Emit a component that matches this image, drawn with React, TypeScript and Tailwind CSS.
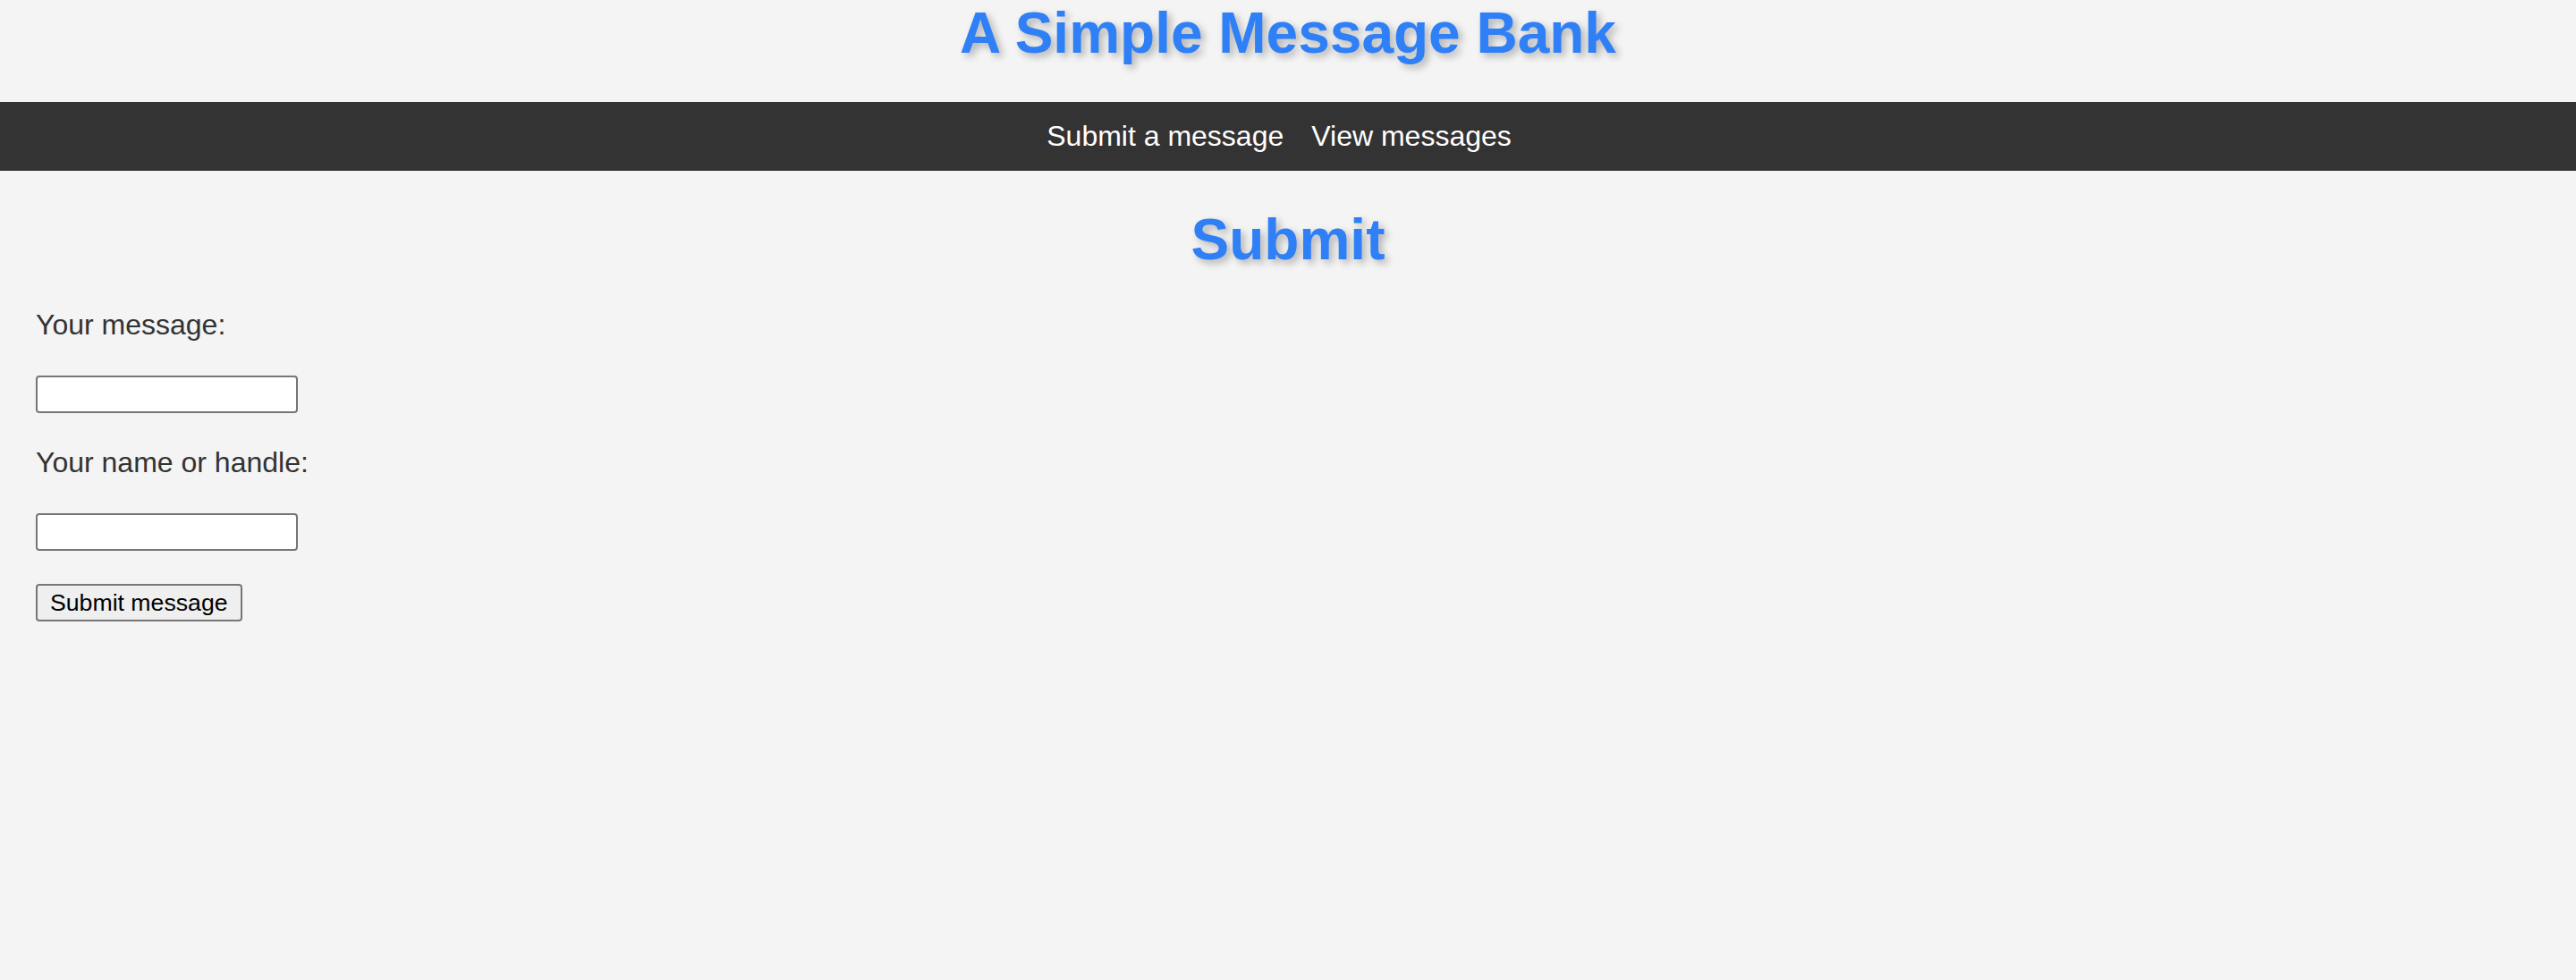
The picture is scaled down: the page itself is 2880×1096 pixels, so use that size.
import React, { useState } from "react";

const headingShadow = "[text-shadow:4px_4px_8px_rgba(0,0,0,0.28)]";

const App = () => {
  const [message, setMessage] = useState("");
  const [handle, setHandle] = useState("");

  return (
    <div className="min-h-screen bg-[#f4f4f4] font-['Liberation_Sans',Arial,sans-serif]">
      {/* Header */}
      <header>
        <h1 className={`text-center text-[64px] leading-[74px] font-bold text-[#2f80f7] ${headingShadow}`}>
          A Simple Message Bank
        </h1>
      </header>

      {/* Nav bar */}
      <nav className="mt-[40px] bg-[#333333] py-[20px] pr-[20px] flex justify-center gap-[31px]">
        <a href="#submit" className="text-[32px] leading-[37px] text-white">
          Submit a message
        </a>
        <a href="#view" className="text-[32px] leading-[37px] text-white">
          View messages
        </a>
      </nav>

      <main className="px-[40px]">
        <h2 className={`mt-[40px] text-center text-[64px] leading-[74px] font-bold text-[#2f80f7] ${headingShadow}`}>
          Submit
        </h2>

        <form
          className="mt-[40px] flex flex-col items-start gap-[37.5px]"
          onSubmit={(e) => e.preventDefault()}
        >
          <label htmlFor="message" className="text-[32px] leading-[37px] text-[#333333]">
            Your message:
          </label>
          <input
            id="message"
            type="text"
            value={message}
            onChange={(e) => setMessage(e.target.value)}
            className="w-[293px] h-[42px] bg-white border-2 border-[#767676] rounded-[4px] px-[4px] text-[26px]"
          />
          <label htmlFor="handle" className="text-[32px] leading-[37px] text-[#333333]">
            Your name or handle:
          </label>
          <input
            id="handle"
            type="text"
            value={handle}
            onChange={(e) => setHandle(e.target.value)}
            className="w-[293px] h-[42px] bg-white border-2 border-[#767676] rounded-[4px] px-[4px] text-[26px]"
          />
          <button
            type="submit"
            className="h-[42px] px-[14px] bg-[#efefef] border-2 border-[#767676] rounded-[4px] text-[26.67px] leading-[31px] text-black"
          >
            Submit message
          </button>
        </form>
      </main>
    </div>
  );
};

export default App;
